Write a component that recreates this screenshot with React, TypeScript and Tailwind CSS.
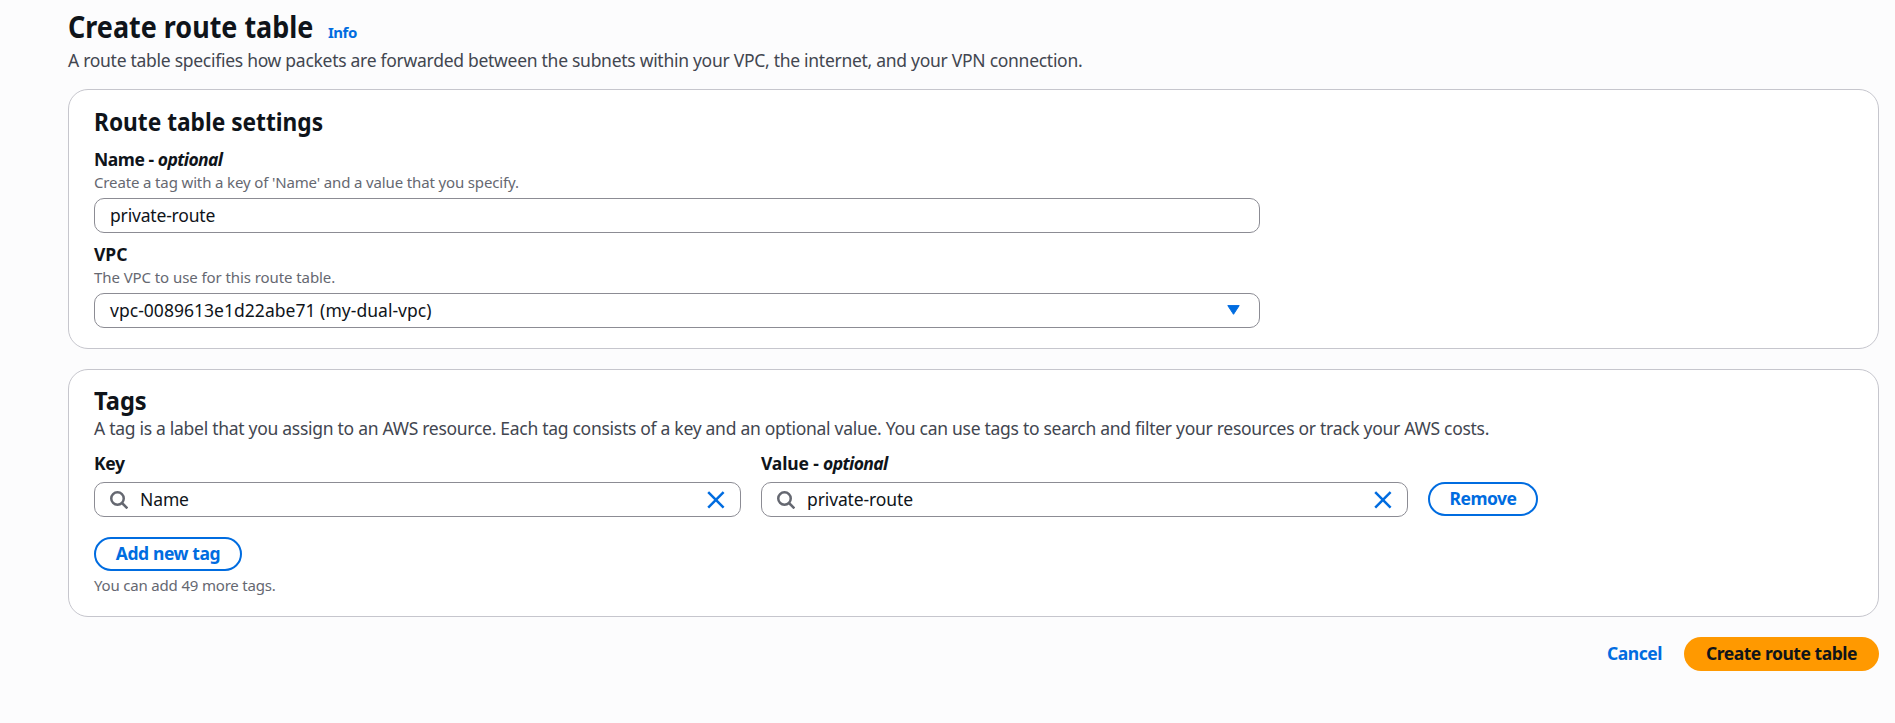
import type { ReactNode } from "react";

function SearchIcon() {
  return (
    <svg viewBox="0 0 18 18" className="h-[18px] w-[18px] shrink-0" fill="none" stroke="#656871" strokeWidth="2.5">
      <circle cx="7.5" cy="7.5" r="6.25" />
      <path d="M12 12l5.4 5.4" />
    </svg>
  );
}

function CloseIcon() {
  return (
    <svg viewBox="0 0 18 18" className="h-[18px] w-[18px] shrink-0" fill="none" stroke="#006ce0" strokeWidth="2.5">
      <path d="M1.2 1.2l15.4 15.4M16.6 1.2l-15.4 15.4" />
    </svg>
  );
}

function Label({ text, optional, className = "" }: { text: string; optional?: boolean; className?: string }) {
  return (
    <div className={`text-[17.5px] leading-[25px] font-bold whitespace-pre ${className}`}>
      {text}
      {optional && (
        <>
          {" - "}
          <span className="tracking-[-0.6px] italic">optional</span>
        </>
      )}
    </div>
  );
}

function Hint({ children, className = "tracking-[-0.14px]" }: { children: ReactNode; className?: string }) {
  return <div className={`text-[15px] leading-[20px] text-[#656871] ${className}`}>{children}</div>;
}

function TagInput({ value }: { value: string }) {
  return (
    <div className="mt-[6px] flex h-[35px] w-[647px] items-center rounded-[10px] border border-[#8c8c94] bg-white px-[15px]">
      <SearchIcon />
      <span className="ml-[12px] flex-1 text-[17.5px] leading-[25px] tracking-[-0.12px]">{value}</span>
      <CloseIcon />
    </div>
  );
}

export default function App() {
  return (
    <div className="h-[723px] w-[1895px] overflow-hidden bg-[#fcfcfd] pt-[8px] pr-[16px] pl-[68px] font-['Noto_Sans',sans-serif] text-[#0f141a]">
      <header>
        <div className="flex h-[38px] items-baseline">
          <h1 className="w-[260px] origin-left scale-x-[0.898] text-[30px] leading-[38px] font-bold whitespace-nowrap">
            Create route table
          </h1>
          <a className="text-[15px] leading-[20px] font-bold tracking-[-0.5px] text-[#006ce0]">Info</a>
        </div>
        <p className="mt-[2px] text-[17.5px] leading-[25px] tracking-[-0.28px] text-[#424650]">
          A route table specifies how packets are forwarded between the subnets within your VPC, the internet, and your VPN connection.
        </p>
      </header>

      <section className="mt-[16px] h-[260px] rounded-[20px] border border-[#c6c6cd] bg-white px-[25px] pt-[16px]">
        <h2 className="origin-left scale-x-[0.908] text-[25px] leading-[30px] font-bold">Route table settings</h2>
        <div className="mt-[11px]">
          <Label text="Name" optional className="tracking-[-0.45px]" />
          <Hint>Create a tag with a key of 'Name' and a value that you specify.</Hint>
          <div className="mt-[6px] flex h-[35px] w-[1166px] items-center rounded-[10px] border border-[#8c8c94] px-[15px] pb-px text-[17.5px] leading-[25px] tracking-[-0.18px]">
            private-route
          </div>
        </div>
        <div className="mt-[9px]">
          <Label text="VPC" />
          <Hint className="tracking-[-0.08px]">The VPC to use for this route table.</Hint>
          <div className="mt-[6px] flex h-[35px] w-[1166px] items-center justify-between rounded-[10px] border border-[#8c8c94] pr-[19px] pb-px pl-[15px] text-[17.5px] leading-[25px]">
            <span className="tracking-[0.03px]">vpc-0089613e1d22abe71 (my-dual-vpc)</span>
            <svg viewBox="0 0 13 10" className="h-[10px] w-[13px]" fill="#006ce0" stroke="#006ce0" strokeLinejoin="round">
              <path d="M.8 .6H12.2L6.5 9.3z" />
            </svg>
          </div>
        </div>
      </section>

      <section className="mt-[20px] h-[248px] rounded-[20px] border border-[#c6c6cd] bg-white px-[25px] pt-[15px]">
        <h2 className="origin-left scale-x-[0.945] text-[25px] leading-[30px] font-bold">Tags</h2>
        <p className="mt-px text-[17.5px] leading-[25px] tracking-[-0.285px] text-[#424650]">
          A tag is a label that you assign to an AWS resource. Each tag consists of a key and an optional value. You can use tags to search and filter your resources or track your AWS costs.
        </p>
        <div className="mt-[10px] flex gap-5">
          <div>
            <Label text="Key" className="tracking-[-0.3px]" />
            <TagInput value="Name" />
          </div>
          <div>
            <Label text="Value" optional className="tracking-[-0.15px]" />
            <TagInput value="private-route" />
          </div>
          <button className="mt-[31px] h-[34px] w-[110px] rounded-full border-2 border-[#006ce0] pb-[2px] text-[17.5px] leading-[25px] font-bold tracking-[-0.5px] text-[#006ce0]">
            Remove
          </button>
        </div>
        <button className="mt-[20px] mb-[4px] block h-[34px] w-[148px] rounded-full border-2 border-[#006ce0] pb-[2px] text-[17.5px] leading-[25px] font-bold tracking-[-0.4px] text-[#006ce0]">
          Add new tag
        </button>
        <Hint className="tracking-[-0.18px]">You can add 49 more tags.</Hint>
      </section>

      <footer className="mt-[20px] flex justify-end text-[17.5px] leading-[25px] font-bold tracking-[-0.46px]">
        <button className="mr-[22px] pb-[2px] text-[#006ce0]">Cancel</button>
        <button className="h-[34px] w-[195px] rounded-full bg-[#ff9900] pb-[2px]">Create route table</button>
      </footer>
    </div>
  );
}
